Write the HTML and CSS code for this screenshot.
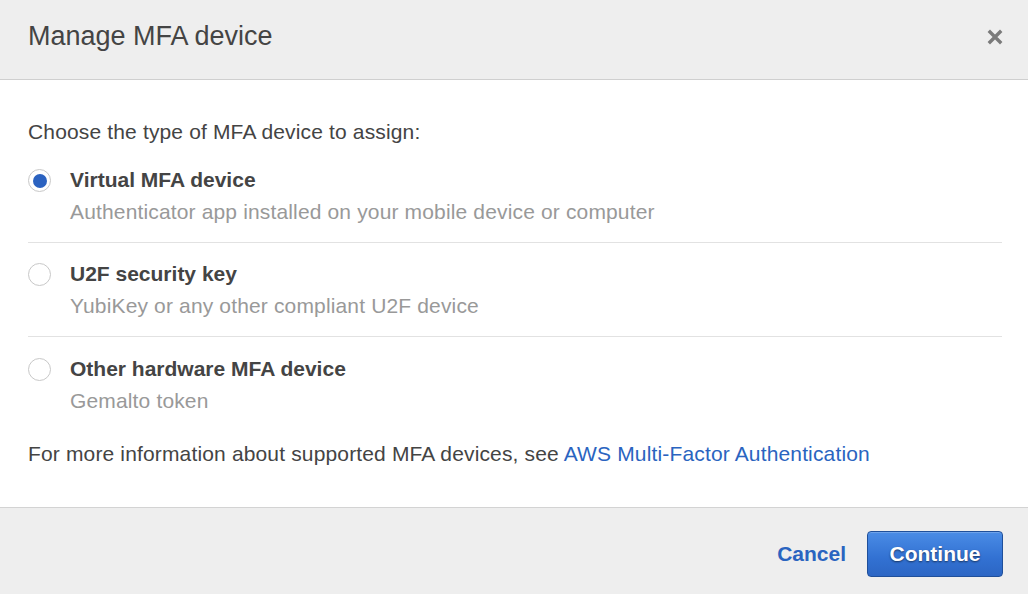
FILE: index.html
```html
<!DOCTYPE html>
<html>
<head>
<meta charset="utf-8">
<link rel="stylesheet" href="styles.css">
</head>
<body>
<div class="modal">
  <div class="modal-header">
    <h1 class="title">Manage MFA device</h1>
    <span class="close" aria-label="Close">
      <svg width="16" height="16" viewBox="0 0 16 16"><path d="M3 3 L13 13 M13 3 L3 13" stroke="#7a7a7a" stroke-width="3.4" stroke-linecap="square"/></svg>
    </span>
  </div>
  <div class="modal-body">
    <p class="intro">Choose the type of MFA device to assign:</p>
    <div class="options">
      <label class="option">
        <span class="radio checked"></span>
        <span class="option-text">
          <span class="option-label">Virtual MFA device</span>
          <span class="option-desc">Authenticator app installed on your mobile device or computer</span>
        </span>
      </label>
      <label class="option">
        <span class="radio"></span>
        <span class="option-text">
          <span class="option-label">U2F security key</span>
          <span class="option-desc">YubiKey or any other compliant U2F device</span>
        </span>
      </label>
      <label class="option">
        <span class="radio"></span>
        <span class="option-text">
          <span class="option-label">Other hardware MFA device</span>
          <span class="option-desc">Gemalto token</span>
        </span>
      </label>
    </div>
    <p class="info">For more information about supported MFA devices, see <a class="link" href="#">AWS Multi-Factor Authentication</a></p>
  </div>
  <div class="modal-footer">
    <a class="cancel" href="#">Cancel</a>
    <button class="btn-primary">Continue</button>
  </div>
</div>
</body>
</html>
```
FILE: styles.css
```css
html, body {
  margin: 0;
  padding: 0;
  background: #eeeeee;
}
body {
  font-family: "Liberation Sans", Arial, Helvetica, sans-serif;
  color: #444444;
}
.modal {
  width: 1028px;
  height: 594px;
  display: flex;
  flex-direction: column;
  overflow: hidden;
}
.modal-header {
  height: 79px;
  background: #eeeeee;
  border-bottom: 1px solid #cfcfcf;
  display: flex;
  align-items: center;
  justify-content: space-between;
  padding: 0 25px 0 28px;
  box-sizing: content-box;
}
.title {
  margin: 0;
  font-size: 27px;
  font-weight: normal;
  color: #444444;
  line-height: 30px;
  position: relative;
  top: -4px;
}
.close {
  display: flex;
  width: 16px;
  height: 16px;
  position: relative;
  top: -3px;
}
.modal-body {
  background: #ffffff;
  padding: 40px 26px 41px 28px;
  border-bottom: 1px solid #d3d3d3;
}
.intro, .info {
  margin: 0;
  font-size: 21px;
  letter-spacing: 0.15px;
  line-height: 24px;
  color: #444444;
}
.options {
  margin-top: 6px;
  margin-bottom: 25px;
}
.option {
  display: flex;
  align-items: flex-start;
  padding: 15px 0 14px;
  border-bottom: 1px solid #e2e2e2;
  cursor: pointer;
}
.option:first-child {
  padding-top: 14px;
}
.option:last-child {
  border-bottom: none;
  padding-top: 16px;
  padding-bottom: 0;
}
.radio {
  width: 23px;
  height: 23px;
  border: 1px solid #c8c8c8;
  border-radius: 50%;
  box-sizing: border-box;
  margin-top: 5px;
  margin-right: 19px;
  flex-shrink: 0;
  background: #fff;
  position: relative;
}
.radio.checked::after {
  content: "";
  position: absolute;
  left: 3.5px;
  top: 3.5px;
  width: 14px;
  height: 14px;
  border-radius: 50%;
  background: #2b62c0;
}
.option-text {
  display: flex;
  flex-direction: column;
}
.option-label {
  font-size: 21px;
  font-weight: bold;
  line-height: 32px;
  color: #444444;
}
.option-desc {
  font-size: 21px;
  letter-spacing: 0.15px;
  line-height: 32px;
  color: #999999;
}
.link {
  color: #2a64c0;
  text-decoration: none;
}
.modal-footer {
  flex: 1;
  background: #eeeeee;
  display: flex;
  align-items: flex-start;
  justify-content: flex-end;
  padding: 23px 25px 0 0;
  gap: 21px;
}
.cancel {
  font-size: 21px;
  font-weight: bold;
  color: #2a64c0;
  text-decoration: none;
  line-height: 46px;
}
.btn-primary {
  width: 136px;
  height: 46px;
  border: 1px solid #1f4f9a;
  border-radius: 4px;
  background: linear-gradient(to bottom, #4a8ce6 0%, #3271d2 60%, #2c66c4 100%);
  color: #ffffff;
  font-family: "Liberation Sans", Arial, Helvetica, sans-serif;
  font-size: 21px;
  font-weight: bold;
  text-shadow: 0 1px 2px rgba(0, 0, 0, 0.55);
  box-shadow: inset 0 1px 0 rgba(255, 255, 255, 0.2);
  cursor: pointer;
  padding: 0;
}
```
